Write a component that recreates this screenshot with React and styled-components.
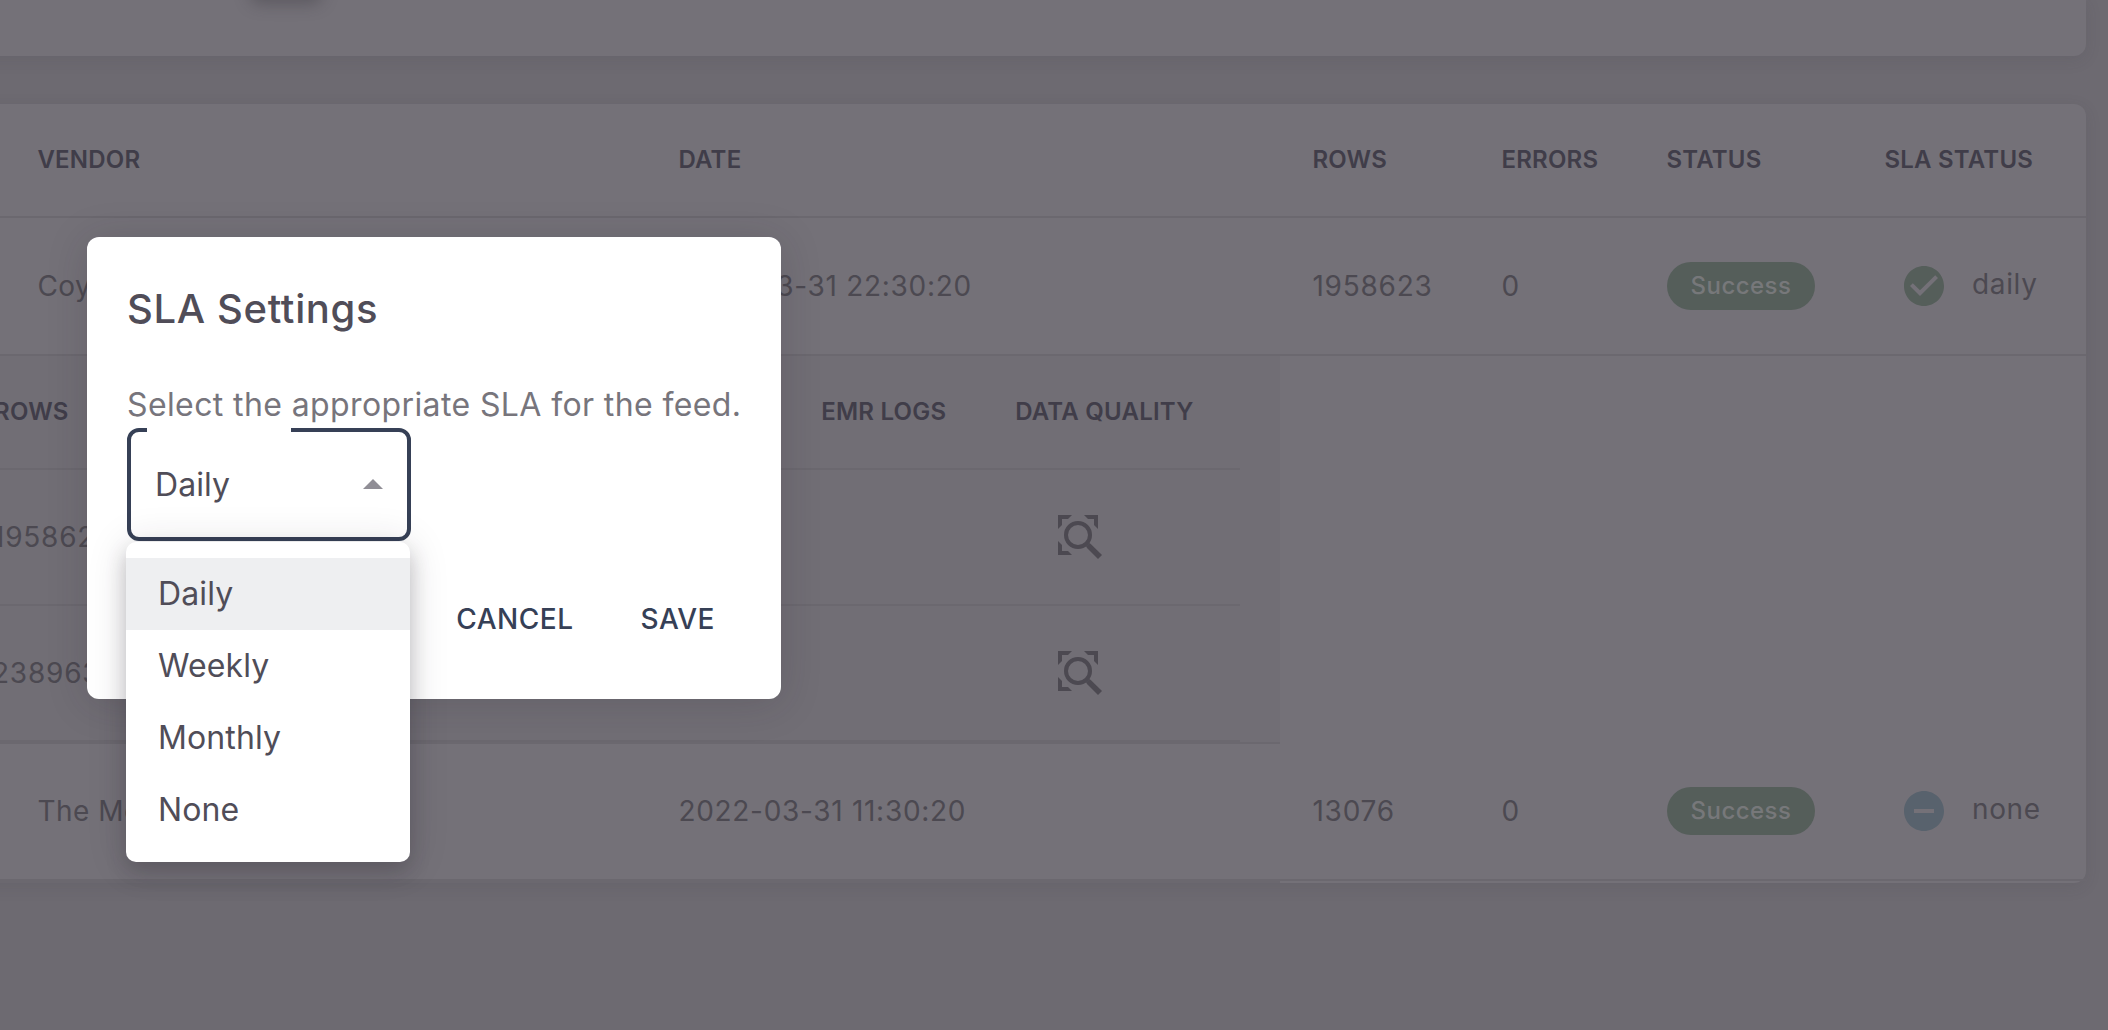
import React from "react";
import styled, { createGlobalStyle } from "styled-components";

const c = {
  page: "#6d6a71",
  card: "#747178",
  nested: "#716e75",
  line: "#6b686f",
  text: "#4c4951",
  head: "#403d49",
  green: "#555e5a",
  blue: "#58626d",
  navy: "#364056",
};

const Global = createGlobalStyle`
  * { box-sizing: border-box; }
  html, body { margin: 0; height: 100%; overflow: hidden; background: ${c.page}; }
  body { font-family: Inter, "Liberation Sans", sans-serif; color: ${c.text}; }
`;

const Page = styled.div`
  position: relative;
  width: 2108px;
  height: 1030px;
  overflow: hidden;
  display: flex;
  flex-direction: column;
  gap: 48px;
`;

const Card = styled.section`
  flex: none;
  width: 2126px;
  margin-left: -40px;
  padding-left: 40px;
  background: ${c.card};
  border-radius: 12px;
  box-shadow: 0 4px 16px rgba(60, 55, 66, 0.12);
`;

const Toolbar = styled(Card)`
  height: 56px;
  border-radius: 0 0 12px 12px;
  display: flex;
  padding-left: 292px;
`;

const TableCard = styled(Card)`
  height: 779px;
`;

const FooterStrip = styled.div`
  width: 1280px;
  height: 2px;
  background: ${c.line};
`;

const FloatingButton = styled.div`
  width: 68px;
  height: 40px;
  margin-top: -42px;
  border-radius: 8px;
  box-shadow: 0 4px 16px 2px rgba(50, 46, 56, 0.36);
`;

const Row = styled.div`
  display: grid;
  grid-template-columns: 641px 634px 189px 165px 218px 1fr;
  align-items: center;
  padding-left: 37.4px;
  padding-bottom: ${(p) => p.$pb || 0}px;
  height: ${(p) => p.$h}px;
  border-bottom: 2px solid ${c.line};
`;

const HeadCell = styled.div`
  font-size: 24px;
  line-height: 36px;
  font-weight: 600;
  letter-spacing: 0.22px;
  color: ${c.head};
  white-space: nowrap;
`;

const Cell = styled.div`
  font-size: 28px;
  line-height: 40px;
  letter-spacing: ${(p) => p.$ls ?? 0.78}px;
  white-space: nowrap;
`;

const Chip = styled.span`
  display: flex;
  align-items: center;
  justify-content: center;
  width: 148px;
  height: 48px;
  margin-left: 0.6px;
  padding-bottom: 2px;
  border-radius: 24px;
  background: ${c.green};
  color: #77787a;
  font-size: 24px;
  font-weight: 500;
  letter-spacing: 0.45px;
`;

const Sla = styled.div`
  display: flex;
  align-items: center;
  gap: 24px;
  padding-left: 15.6px;
`;

const SlaLabel = styled(Cell)`
  padding-bottom: 4px;
`;

const Icon = styled.svg`
  flex: none;
  display: block;
  width: ${(p) => p.$size}px;
  height: ${(p) => p.$size}px;
  fill: ${(p) => p.$color};
`;

const Arrow = styled(Icon)`
  margin-bottom: 2px;
`;

const Expanded = styled.div`
  width: 1280px;
  height: 388px;
  padding-right: 40px;
  background: ${c.nested};
  border-bottom: 2px solid ${c.line};
`;

const SubRow = styled.div`
  display: grid;
  grid-template-columns: 821.2px 194px 1fr;
  align-items: center;
  height: ${(p) => p.$h}px;
  border-bottom: 2px solid ${c.line};
`;

const Shift = styled.div`
  margin-left: ${(p) => p.$x}px;
`;

const IconCell = styled.div`
  padding-left: 42.8px;
`;

const Dialog = styled.div`
  position: absolute;
  left: 87px;
  top: 237px;
  width: 694px;
  height: 462px;
  padding: 40px;
  display: flex;
  flex-direction: column;
  background: #fff;
  border-radius: 12px;
  box-shadow: 0 4px 40px rgba(40, 36, 46, 0.18);
`;

const Title = styled.h2`
  margin: 6px 0 0;
  font-size: 40px;
  line-height: 52px;
  font-weight: 500;
  letter-spacing: 0.65px;
  color: #504d58;
  white-space: nowrap;
`;

const Message = styled.p`
  margin: 48px 0 0;
  font-size: 32px;
  line-height: 44px;
  letter-spacing: 0.39px;
  color: #77757c;
  white-space: nowrap;
`;

const Select = styled.div`
  flex: none;
  position: relative;
  width: 284px;
  height: 113px;
  margin-top: 1px;
  padding: 0 24px 0 24px;
  display: flex;
  align-items: center;
  justify-content: space-between;
  border: 4px solid ${c.navy};
  border-radius: 12px;
  font-size: 32px;
  letter-spacing: 0.1px;
  color: #504d58;
`;

const Notch = styled.span`
  position: absolute;
  left: 16px;
  top: -4px;
  width: 144px;
  height: 4px;
  background: #fff;
`;

const Actions = styled.div`
  display: flex;
  justify-content: flex-end;
  gap: 67px;
  margin-top: 58px;
  padding-right: 26px;
`;

const Action = styled.button`
  border: 0;
  padding: 0;
  background: none;
  font: 500 28px/40px Inter, "Liberation Sans", sans-serif;
  letter-spacing: 0.5px;
  color: ${c.navy};
`;

const Menu = styled.ul`
  position: absolute;
  left: 126px;
  top: 542px;
  width: 284px;
  height: 320px;
  margin: 0;
  padding: 16px 0;
  list-style: none;
  background: #fff;
  border-radius: 10px;
  box-shadow: 0 10px 20px rgba(40, 38, 48, 0.24), 0 2px 40px rgba(40, 38, 48, 0.14);
`;

const Option = styled.li`
  height: 72px;
  padding-left: 32px;
  font-size: 32px;
  line-height: 72px;
  letter-spacing: 0.12px;
  color: #504d58;
  background: ${(p) => (p.$selected ? "#eeeff1" : "transparent")};
`;

const disc = "M12 2C6.48 2 2 6.48 2 12s4.48 10 10 10 10-4.48 10-10S17.52 2 12 2z";
const CheckIcon = () => (
  <Icon $size={48} $color={c.green} viewBox="0 0 24 24">
    <path d={disc + "m-2 15-5-5 1.41-1.41L10 14.17l7.59-7.59L19 8l-9 9z"} />
  </Icon>
);
const MinusIcon = () => (
  <Icon $size={48} $color={c.blue} viewBox="0 0 24 24">
    <path d={disc + "m5 11H7v-2h10v2z"} />
  </Icon>
);
const QualityIcon = () => (
  <Icon $size={44} $color={c.text} viewBox="0 0 44 44">
    <path d="M0 0h14l-4 4H4v6l-4 4zM26 0h14v14l-4-4V4h-6zM0 26l4 4v6h6l4 4H0z" />
    <path fillRule="evenodd" d="M20 6a14 14 0 1 0 0 28a14 14 0 1 0 0-28zm0 4a10 10 0 1 1 0 20a10 10 0 1 1 0-20z" />
    <path d="M28 31.500L31.500 28L33 29.200L44 40L40 44L29.500 33.500z" />
  </Icon>
);

const feeds = [
  { vendor: "Coyote", date: "2021-03-31 22:30:20", rows: "1958623", errors: "0", sla: "daily", Mark: CheckIcon },
  { vendor: "The Movers", date: "2022-03-31 11:30:20", rows: "13076", errors: "0", sla: "none", Mark: MinusIcon },
];

function Feed({ feed, height, pb }) {
  return (
    <Row $h={height} $pb={pb}>
      <Cell $ls={0.5}>{feed.vendor}</Cell>
      <Cell $ls={0.7}>{feed.date}</Cell>
      <Cell>{feed.rows}</Cell>
      <Cell>{feed.errors}</Cell>
      <Chip>Success</Chip>
      <Sla>
        <feed.Mark />
        <SlaLabel $ls={0.65}>{feed.sla}</SlaLabel>
      </Sla>
    </Row>
  );
}

export default function App() {
  return (
    <>
      <Global />
      <Page>
        <Toolbar>
          <FloatingButton />
        </Toolbar>
        <TableCard>
          <Row $h={114}>
            {["VENDOR", "DATE", "ROWS", "ERRORS", "STATUS", "SLA STATUS"].map((t) => (
              <HeadCell key={t}>{t}</HeadCell>
            ))}
          </Row>
          <Feed feed={feeds[0]} height={138} />
          <Expanded>
            <SubRow $h={114}>
              <HeadCell>
                <Shift $x={-6}>ROWS</Shift>
              </HeadCell>
              <HeadCell>EMR LOGS</HeadCell>
              <HeadCell>DATA QUALITY</HeadCell>
            </SubRow>
            {["1958623", "2389632"].map((n, i) => (
              <SubRow key={n} $h={136}>
                <Cell>
                  <Shift $x={i ? -8 : -7}>{n}</Shift>
                </Cell>
                <span />
                <IconCell>
                  <QualityIcon />
                </IconCell>
              </SubRow>
            ))}
          </Expanded>
          <Feed feed={feeds[1]} height={137} pb={1} />
          <FooterStrip />
        </TableCard>
        <Dialog>
          <Title>SLA Settings</Title>
          <Message>Select the appropriate SLA for the feed.</Message>
          <Select>
            <Notch />
            Daily
            <Arrow $size={20} $color="#908e96" viewBox="0 0 20 20">
              <path d="M0 15L10 5L20 15z" />
            </Arrow>
          </Select>
          <Actions>
            <Action>CANCEL</Action>
            <Action>SAVE</Action>
          </Actions>
        </Dialog>
        <Menu>
          {["Daily", "Weekly", "Monthly", "None"].map((o) => (
            <Option key={o} $selected={o === "Daily"}>
              {o}
            </Option>
          ))}
        </Menu>
      </Page>
    </>
  );
}
